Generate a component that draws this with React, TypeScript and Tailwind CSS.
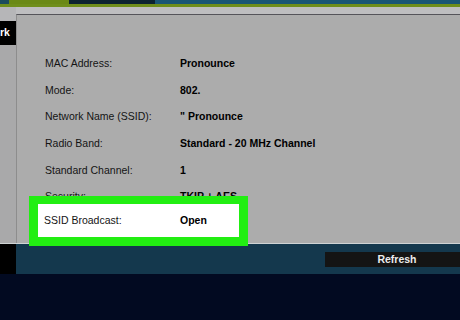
import React from "react";

// rows of the wireless settings panel
const rows: { label: string; value: string }[] = [
  { label: "MAC Address:", value: "Pronounce" },
  { label: "Mode:", value: "802." },
  { label: "Network Name (SSID):", value: "\" Pronounce" },
  { label: "Radio Band:", value: "Standard - 20 MHz Channel" },
  { label: "Standard Channel:", value: "1" },
  { label: "Security:", value: "TKIP + AES" },
];

export default function App() {
  return (
    <div
      className="relative flex h-[320px] w-[460px] flex-col overflow-hidden bg-[#020a21] text-[10.5px] text-[#141414]"
      style={{ fontFamily: '"Liberation Sans", Arial, sans-serif' }}
    >
      {/* top nav strip */}
      <div className="flex h-[4px] shrink-0">
        <div className="w-[9px] bg-[#1c4c5c]" />
        <div className="w-[60px] bg-[#6a8916]" />
        <div className="w-[86px] bg-[#0c2330]" />
        <div className="flex-1 bg-[#1a5675]" />
      </div>
      <div className="h-[3px] shrink-0 bg-[#6f8e1b]" />

      {/* main area */}
      <div className="flex h-[236px] shrink-0">
        <div className="flex w-[16px] shrink-0 flex-col bg-[#a9a9aa]">
          <div className="h-[14px] bg-[#b6b6b8]" />
          <div className="flex h-[24px] items-center bg-black pl-[0px] font-bold whitespace-nowrap text-white">
            rk
          </div>
        </div>
        <div className="flex flex-1 flex-col">
          <div className="h-[7px] bg-[#bebec0]" />
          <div className="flex-1 border-t border-l border-t-[#55545a] border-l-[#8d8d8d] bg-[#acacac] pt-[35.5px] pl-[28px]">
            {rows.map((r) => (
              <div key={r.label} className="flex h-[26.7px] items-center whitespace-nowrap">
                <div className="w-[135px] shrink-0">{r.label}</div>
                <div className="font-bold text-black">{r.value}</div>
              </div>
            ))}
          </div>
        </div>
      </div>

      {/* bottom toolbar */}
      <div className="h-[1px] shrink-0 bg-[#cfd3d4]" />
      <div className="flex h-[30px] shrink-0">
        <div className="w-[16px] shrink-0 bg-black" />
        <div className="flex flex-1 overflow-hidden bg-[#14384d] pt-[8px] pl-[309px]">
          <div className="flex h-[15px] w-[144px] shrink-0 items-center justify-center bg-[#141414] font-bold text-[#ececec]">
            Refresh
          </div>
        </div>
      </div>
      <div className="flex-1 bg-[#020a21]" />

      {/* green highlight */}
      <div className="absolute top-[196px] left-[29px] flex h-[50px] w-[219px] border-[9px] border-t-[8px] border-[#22ee12] bg-white pl-[6px]">
        <div className="flex flex-1 items-center whitespace-nowrap">
          <div className="w-[136px] shrink-0">SSID Broadcast:</div>
          <div className="font-bold text-black">Open</div>
        </div>
      </div>
    </div>
  );
}
